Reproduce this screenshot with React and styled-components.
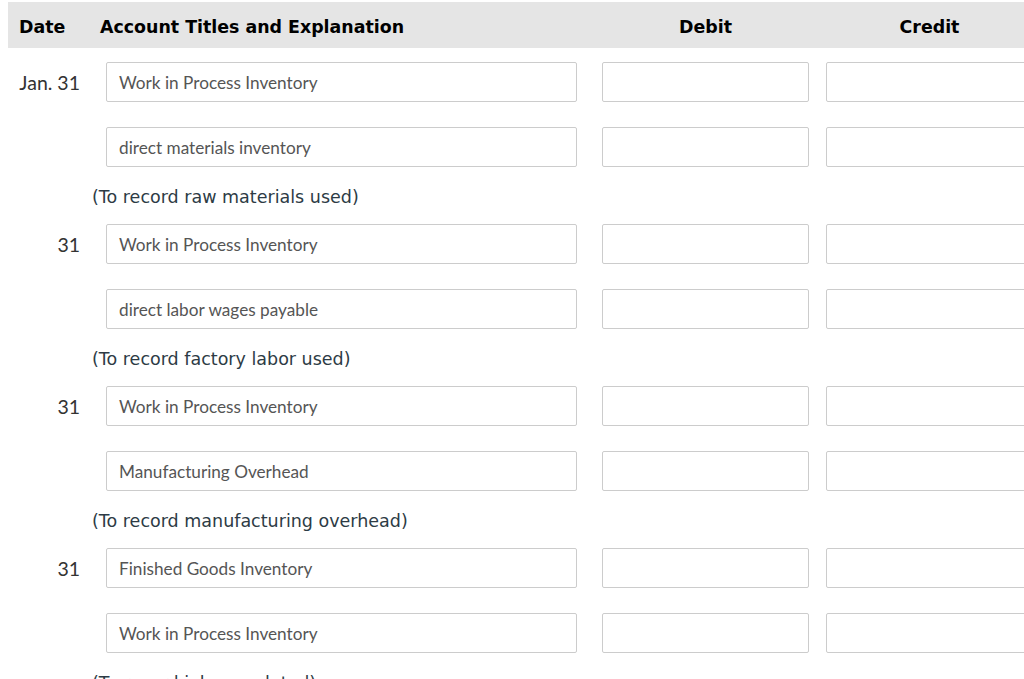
import React from "react";
import styled, { createGlobalStyle } from "styled-components";

const GlobalStyle = createGlobalStyle`
  html, body {
    margin: 0;
    padding: 0;
    background: #fff;
    overflow: hidden;
  }
  body {
    font-family: "Lato", "Liberation Sans", sans-serif;
  }
`;

const entries = [
  {
    date: "Jan. 31",
    lines: ["Work in Process Inventory", "direct materials inventory"],
    note: "(To record raw materials used)",
  },
  {
    date: "31",
    lines: ["Work in Process Inventory", "direct labor wages payable"],
    note: "(To record factory labor used)",
  },
  {
    date: "31",
    lines: ["Work in Process Inventory", "Manufacturing Overhead"],
    note: "(To record manufacturing overhead)",
  },
  {
    date: "31",
    lines: ["Finished Goods Inventory", "Work in Process Inventory"],
    note: "(To record job completed)",
  },
];

const Page = styled.div`
  width: 1100px;
  padding: 2px 0 0 8px;
`;

const Grid = styled.div`
  display: grid;
  grid-template-columns: 84px 485px 232px 224px;
`;

const HeaderRow = styled(Grid)`
  background: #e5e5e5;
  height: 46px;
  box-sizing: border-box;
  padding-top: 3px;
  align-items: center;
  font-family: "DejaVu Sans", Verdana, sans-serif;
  font-weight: bold;
  font-size: 17.4px;
  color: #000;
  margin-bottom: 14px;
`;

const HeadCell = styled.div`
  padding-left: ${(p) => p.$pad || 0}px;
  text-align: ${(p) => p.$align || "left"};
`;

const LineRow = styled(Grid)`
  height: 40px;
  align-items: center;
  margin-bottom: ${(p) => (p.$last ? 0 : 25)}px;
`;

const DateCell = styled.div`
  text-align: right;
  padding-right: 12px;
  font-size: 19.5px;
  color: #333;
`;

const Field = styled.div`
  box-sizing: border-box;
  height: 40px;
  margin-left: ${(p) => p.$offset}px;
  width: ${(p) => (p.$wide ? "471px" : "207px")};
  border: 1px solid #cccccc;
  border-radius: 2px;
  background: #fff;
  padding-left: 12px;
  display: flex;
  align-items: center;
  font-size: 17.2px;
  color: #555;
`;

const Note = styled.div`
  padding-left: 84px;
  margin: 13px 0 10px;
  line-height: 34px;
  font-family: "DejaVu Sans", Verdana, sans-serif;
  font-size: 17.5px;
  color: #2d3b45;
`;

function App() {
  return (
    <>
      <GlobalStyle />
      <Page>
        <HeaderRow>
          <HeadCell $pad={11}>Date</HeadCell>
          <HeadCell $pad={8}>Account Titles and Explanation</HeadCell>
          <HeadCell $pad={25} $align="center">Debit</HeadCell>
          <HeadCell $pad={17} $align="center">Credit</HeadCell>
        </HeaderRow>
        {entries.map((entry, i) => (
          <div key={i}>
            {entry.lines.map((line, j) => (
              <LineRow key={j} $last={j === entry.lines.length - 1}>
                <DateCell>{j === 0 ? entry.date : ""}</DateCell>
                <Field $wide $offset={14}>{line}</Field>
                <Field $offset={25} />
                <Field $offset={17} />
              </LineRow>
            ))}
            <Note>{entry.note}</Note>
          </div>
        ))}
      </Page>
    </>
  );
}

export default App;
